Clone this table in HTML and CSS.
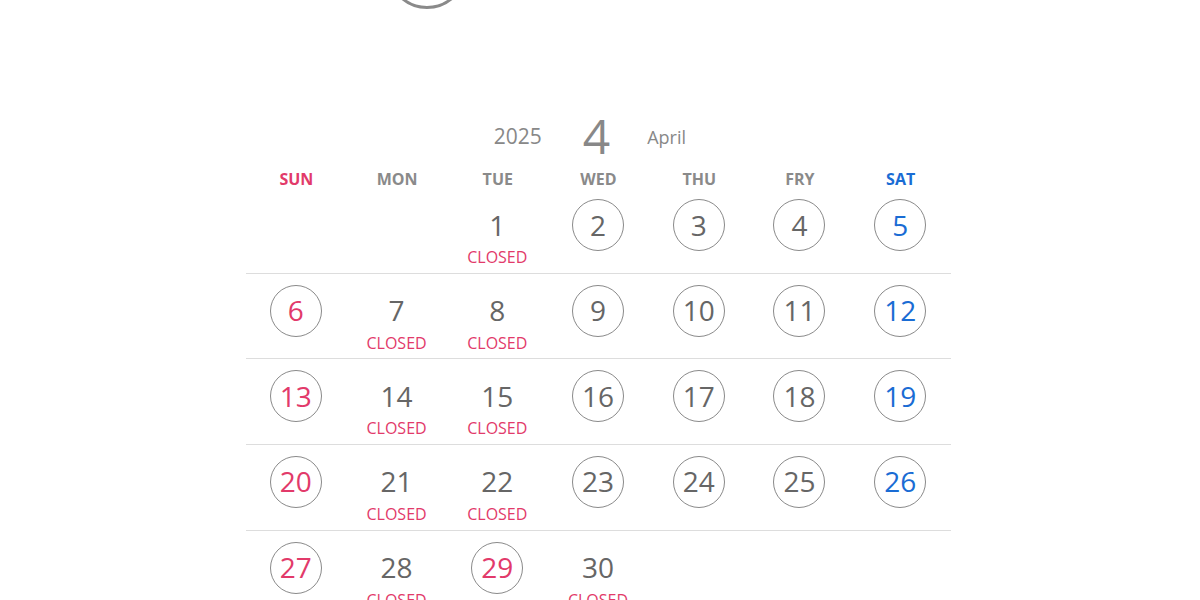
FILE: index.html
```html
<!DOCTYPE html>
<html lang="en">
<head>
<meta charset="utf-8">
<title>Calendar April 2025</title>
<link rel="stylesheet" href="styles.css">
</head>
<body>
<div class="page">
  <div class="top"><div class="ring"></div></div>
  <div class="heading">
    <span class="year">2025</span>
    <span class="month">4</span>
    <span class="mname">April</span>
  </div>
  <div class="weekdays">
    <div class="sun">SUN</div><div>MON</div><div>TUE</div><div>WED</div><div>THU</div><div>FRY</div><div class="sat">SAT</div>
  </div>
  <div class="week">
    <div class="cell"></div>
    <div class="cell"></div>
    <div class="cell"><span class="num">1</span><span class="closed">CLOSED</span></div>
    <div class="cell"><span class="num open">2</span></div>
    <div class="cell"><span class="num open">3</span></div>
    <div class="cell"><span class="num open">4</span></div>
    <div class="cell"><span class="num open sat">5</span></div>
  </div>
  <div class="week">
    <div class="cell"><span class="num open sun">6</span></div>
    <div class="cell"><span class="num">7</span><span class="closed">CLOSED</span></div>
    <div class="cell"><span class="num">8</span><span class="closed">CLOSED</span></div>
    <div class="cell"><span class="num open">9</span></div>
    <div class="cell"><span class="num open">10</span></div>
    <div class="cell"><span class="num open">11</span></div>
    <div class="cell"><span class="num open sat">12</span></div>
  </div>
  <div class="week">
    <div class="cell"><span class="num open sun">13</span></div>
    <div class="cell"><span class="num">14</span><span class="closed">CLOSED</span></div>
    <div class="cell"><span class="num">15</span><span class="closed">CLOSED</span></div>
    <div class="cell"><span class="num open">16</span></div>
    <div class="cell"><span class="num open">17</span></div>
    <div class="cell"><span class="num open">18</span></div>
    <div class="cell"><span class="num open sat">19</span></div>
  </div>
  <div class="week">
    <div class="cell"><span class="num open sun">20</span></div>
    <div class="cell"><span class="num">21</span><span class="closed">CLOSED</span></div>
    <div class="cell"><span class="num">22</span><span class="closed">CLOSED</span></div>
    <div class="cell"><span class="num open">23</span></div>
    <div class="cell"><span class="num open">24</span></div>
    <div class="cell"><span class="num open">25</span></div>
    <div class="cell"><span class="num open sat">26</span></div>
  </div>
  <div class="week">
    <div class="cell"><span class="num open sun">27</span></div>
    <div class="cell"><span class="num">28</span><span class="closed">CLOSED</span></div>
    <div class="cell"><span class="num open sun">29</span></div>
    <div class="cell"><span class="num">30</span><span class="closed">CLOSED</span></div>
    <div class="cell"></div>
    <div class="cell"></div>
    <div class="cell"></div>
  </div>
</div>
</body>
</html>
```

FILE: styles.css
```css
html, body {
  margin: 0;
  padding: 0;
  background: #ffffff;
}
body {
  font-family: "Open Sans", "Noto Sans", sans-serif;
  color: #666666;
  overflow: hidden;
  height: 600px;
  padding-right: 3px;
}
.page {
  width: 705px;
  margin: 0 auto;
}
.top {
  display: flow-root;
  height: 108px;
}
.ring {
  width: 80px;
  height: 80px;
  box-sizing: border-box;
  border: 3px solid #8a8a8a;
  border-radius: 50%;
  margin-top: -71px;
  margin-left: 141px;
}
.heading {
  height: 56px;
  display: grid;
  grid-template-columns: 1fr auto 1fr;
  align-items: center;
  color: #888888;
  padding-right: 4px;
}
.year {
  justify-self: end;
  font-size: 21px;
  margin-right: 41px;
}
.month {
  font-size: 48px;
  line-height: 56px;
}
.mname {
  justify-self: start;
  font-size: 18px;
  margin-left: 37px;
  padding-top: 2px;
}
.weekdays {
  margin-top: 7px;
  margin-bottom: 1px;
  display: grid;
  grid-template-columns: repeat(7, 1fr);
  text-align: center;
  font-weight: 700;
  font-size: 16px;
  line-height: 16px;
  color: #8a8a8a;
}
.weekdays .sun { color: #e23a6a; }
.weekdays .sat { color: #1a6cd4; }
.week {
  display: grid;
  grid-template-columns: repeat(7, 1fr);
  height: 85.67px;
  box-sizing: border-box;
  border-bottom: 1.5px solid #dddddd;
}
.cell {
  display: flex;
  flex-direction: column;
  align-items: center;
  padding-top: 11px;
  padding-right: 1px;
}
.num {
  width: 52px;
  height: 52px;
  box-sizing: border-box;
  display: flex;
  align-items: center;
  justify-content: center;
  font-size: 28px;
  line-height: 52px;
  color: #666666;
  border-radius: 50%;
  padding-bottom: 1px;
}
.num.open {
  border: 1.5px solid #8a8a8a;
}
.num.sun { color: #e23a6a; }
.num.sat { color: #1a6cd4; }
.closed {
  font-size: 16px;
  line-height: 14px;
  margin-top: -1px;
  color: #e23a6a;
}
```
